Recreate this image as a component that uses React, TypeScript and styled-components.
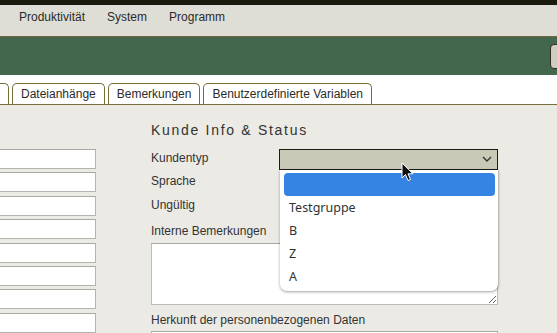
import styled, { createGlobalStyle } from "styled-components";

const Global = createGlobalStyle`
  html, body {
    margin: 0;
    padding: 0;
    overflow: hidden;
    background: #ebeae4;
    font-family: "Liberation Sans", Arial, sans-serif;
    font-size: 12px;
    color: #2d2d2d;
  }
`;

const TopStrip = styled.div`
  height: 5px;
  background: #1b1a0f;
`;

const MenuBar = styled.nav`
  height: 32px;
  box-sizing: border-box;
  display: flex;
  align-items: flex-start;
  gap: 22px;
  padding: 5px 0 0 19px;
  line-height: 14px;
  background: #dfded6;
  border-bottom: 1px solid #75683f;
  span {
    color: #2b2b2b;
  }
`;

const Band = styled.div`
  height: 39px;
  background: #42674c;
  display: flex;
  align-items: center;
  justify-content: flex-end;
`;

const BandButton = styled.button`
  width: 30px;
  height: 25px;
  margin-right: -23px;
  background: #cfcebc;
  border: 1px solid #2e2e22;
  border-radius: 4px;
`;

const TabBar = styled.div`
  height: 28px;
  background: #fff;
  border-bottom: 1px solid #77703a;
  display: flex;
  align-items: flex-end;
  gap: 3px;
  margin-top: -1px;
  padding-top: 1px;
`;

const Tab = styled.div<{ $first?: boolean }>`
  height: 20px;
  min-width: ${(p) => (p.$first ? "60px" : "0")};
  display: flex;
  align-items: center;
  padding: 0 8px;
  margin-left: ${(p) => (p.$first ? "-69px" : "0")};
  background: #fff;
  border: 1px solid #77703a;
  border-bottom: none;
  border-radius: 5px 5px 0 0;
  color: #2b2b2b;
  white-space: nowrap;
`;

const Content = styled.div`
  display: grid;
  grid-template-columns: 100px 347px;
  column-gap: 55px;
  margin-left: -4px;
  padding-top: 15px;
`;

const LeftCol = styled.div`
  display: flex;
  flex-direction: column;
  gap: 3.4px;
  padding-top: 29px;
`;

const TextInput = styled.div`
  height: 20px;
  box-sizing: border-box;
  background: #fff;
  border: 1px solid #b5b5b0;
  border-top-color: #a9a9a4;
`;

const RightCol = styled.div`
  display: flex;
  flex-direction: column;
`;

const Heading = styled.h3`
  margin: 0 0 9px;
  height: 20px;
  line-height: 20px;
  font-size: 14px;
  font-weight: normal;
  letter-spacing: 1.7px;
  color: #333;
`;

const FormRow = styled.div`
  display: grid;
  grid-template-columns: 128px 219px;
  height: 23.4px;
  align-items: start;
`;

const Label = styled.label`
  display: block;
  line-height: 16px;
  padding-top: 1px;
  color: #333;
`;

const SelectWrap = styled.div`
  position: relative;
`;

const Select = styled.select`
  appearance: none;
  width: 219px;
  height: 21px;
  background: #c9c9b8;
  border: 1px solid #1e1e16;
  border-radius: 0;
  font: inherit;
  padding: 0 4px;
`;

const Chevron = styled.svg`
  position: absolute;
  right: 6px;
  top: 7px;
  pointer-events: none;
`;

const Popup = styled.div`
  position: absolute;
  top: 21px;
  left: 1px;
  width: 218px;
  box-sizing: border-box;
  padding: 3px 3px 3px 4px;
  background: #fff;
  border-radius: 0 0 7px 7px;
  box-shadow: 0 1px 3px rgba(0, 0, 0, 0.35), 1px 0 2px rgba(0, 0, 0, 0.12);
  z-index: 2;
  font-family: "Noto Sans", "DejaVu Sans", sans-serif;
  font-size: 12.5px;
`;

const Option = styled.div<{ $active?: boolean }>`
  height: 23px;
  line-height: 24px;
  padding-left: 5px;
  border-radius: 4px;
  color: #2e3436;
  background: ${(p) => (p.$active ? "#3584e4" : "transparent")};
`;

const Cursor = styled.svg`
  position: absolute;
  left: 122px;
  top: 13px;
  z-index: 3;
`;

const NotesLabel = styled(Label)`
  margin-top: 3px;
  height: 20px;
`;

const Notes = styled.textarea`
  width: 347px;
  height: 62px;
  box-sizing: border-box;
  margin: 0;
  background: #fff;
  border: 1px solid #bdbdb8;
  border-top-color: #a9a9a4;
  display: block;
`;

const OriginLabel = styled(Label)`
  margin-top: 6px;
  height: 19px;
`;

const options = ["", "Testgruppe", "B", "Z", "A"];

export default function App() {
  return (
    <>
      <Global />
      <TopStrip />
      <MenuBar>
        <span>Produktivität</span>
        <span>System</span>
        <span>Programm</span>
      </MenuBar>
      <Band>
        <BandButton />
      </Band>
      <TabBar>
        <Tab $first />
        <Tab>Dateianhänge</Tab>
        <Tab>Bemerkungen</Tab>
        <Tab>Benutzerdefinierte Variablen</Tab>
      </TabBar>
      <Content>
        <LeftCol>
          {Array.from({ length: 8 }).map((_, i) => (
            <TextInput key={i} />
          ))}
        </LeftCol>
        <RightCol>
          <Heading>Kunde Info &amp; Status</Heading>
          <FormRow>
            <Label>Kundentyp</Label>
            <SelectWrap>
              <Select defaultValue="">
                <option value=""></option>
              </Select>
              <Chevron width="10" height="6" viewBox="0 0 10 6">
                <path d="M1 1 L5 5 L9 1" fill="none" stroke="#333" strokeWidth="1.4" />
              </Chevron>
              <Popup>
                {options.map((o, i) => (
                  <Option key={i} $active={i === 0}>
                    {o}
                  </Option>
                ))}
              </Popup>
              <Cursor width="13" height="20" viewBox="0 0 13 20">
                <path
                  d="M1 1 L1 16 L4.5 12.5 L7 18.5 L9.5 17.5 L7 11.8 L12 11.8 Z"
                  fill="#111"
                  stroke="#fff"
                  strokeWidth="1"
                  strokeLinejoin="round"
                />
              </Cursor>
            </SelectWrap>
          </FormRow>
          <FormRow>
            <Label>Sprache</Label>
          </FormRow>
          <FormRow>
            <Label>Ungültig</Label>
          </FormRow>
          <NotesLabel>Interne Bemerkungen</NotesLabel>
          <Notes />
          <OriginLabel>Herkunft der personenbezogenen Daten</OriginLabel>
          <TextInput />
        </RightCol>
      </Content>
    </>
  );
}
